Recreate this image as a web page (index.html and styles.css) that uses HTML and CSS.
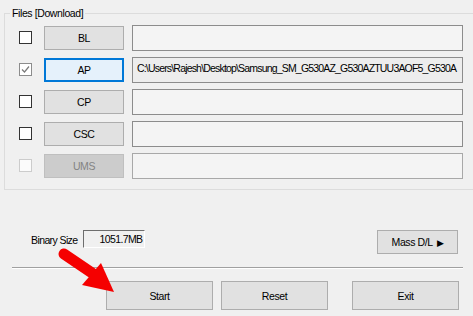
FILE: index.html
```html
<!DOCTYPE html>
<html lang="en">
<head>
    <meta charset="UTF-8">
    <title>Odin - Files</title>
    <link rel="stylesheet" href="styles.css">
</head>
<body>
    <div class="window">
        <div class="group">
            <span class="group-title">Files [Download]</span>

            <div class="file-row">
                <span class="check"></span>
                <button class="btn file-btn">BL</button>
                <div class="path"></div>
            </div>

            <div class="file-row">
                <span class="check checked">
                    <svg width="9" height="9" viewBox="0 0 9 9"><path d="M1 4.5 L3.5 7 L8 1.5" fill="none" stroke="#7a7a7a" stroke-width="1.2"/></svg>
                </span>
                <button class="btn file-btn active">AP</button>
                <div class="path">C:\Users\Rajesh\Desktop\Samsung_SM_G530AZ_G530AZTUU3AOF5_G530A</div>
            </div>

            <div class="file-row">
                <span class="check"></span>
                <button class="btn file-btn">CP</button>
                <div class="path"></div>
            </div>

            <div class="file-row">
                <span class="check"></span>
                <button class="btn file-btn">CSC</button>
                <div class="path"></div>
            </div>

            <div class="file-row">
                <span class="check disabled"></span>
                <button class="btn file-btn disabled">UMS</button>
                <div class="path"></div>
            </div>
        </div>

        <div class="info-row">
            <span class="label">Binary Size</span>
            <div class="size-box">1051.7MB</div>
            <button class="btn mass-btn">Mass D/L <span class="tri">&#9654;</span></button>
        </div>

        <div class="separator"></div>

        <div class="action-row">
            <button class="btn action start">Start</button>
            <button class="btn action reset">Reset</button>
            <button class="btn action exit">Exit</button>
        </div>

        <!-- red arrow pointing at Start -->
        <svg class="arrow" width="473" height="316" viewBox="0 0 473 316">
            <line x1="64" y1="254" x2="95" y2="275" stroke="#f50000" stroke-width="11" stroke-linecap="round"/>
            <polygon points="82,285 101,263 114,292" fill="#f50000"/>
        </svg>
    </div>
</body>
</html>
```

FILE: styles.css
```css
/* page */
body {
    margin: 0;
    background-color: #f0f0f0;
    font-family: 'Liberation Sans', Arial, sans-serif;
    font-size: 10.5px;
    letter-spacing: -0.6px;
    color: #000;
    overflow: hidden;
}

.window {
    position: relative;
    width: 473px;
    height: 316px;
    padding-top: 13px;
    box-sizing: border-box;
}

/* group box */
.group {
    position: relative;
    margin-left: 4px;
    width: 480px;
    height: 164px;
    padding-top: 11px;
    border: 1px solid #dcdcdc;
    border-right: none;
}

.group-title {
    position: absolute;
    top: -8px;
    left: 5px;
    padding: 0 2px;
    background-color: #f0f0f0;
    line-height: 14px;
    letter-spacing: -0.4px;
}

.file-row {
    display: flex;
    align-items: center;
    height: 25px;
    margin-bottom: 7px;
    padding-left: 14px;
}

/* checkboxes */
.check {
    width: 11px;
    height: 11px;
    border: 1px solid #333;
    background-color: #fff;
    display: flex;
    align-items: center;
    justify-content: center;
}

.check.checked {
    border-color: #8c8c8c;
}

.check.disabled {
    border-color: #cccccc;
    background-color: #fbfbfb;
}

/* buttons */
.btn {
    font-family: inherit;
    font-size: 10.5px;
    letter-spacing: -0.4px;
    background-color: #e1e1e1;
    border: 1px solid #adadad;
    color: #000;
    padding: 0;
}

.file-btn {
    width: 80px;
    height: 24px;
    margin-left: 12px;
}

.file-btn.active {
    border: 2px solid #0078d7;
    background-color: #e5f1fb;
}

.file-btn.disabled {
    background-color: #cccccc;
    border-color: #bfbfbf;
    color: #838383;
}

/* path textboxes */
.path {
    box-sizing: border-box;
    width: 331px;
    height: 26px;
    margin-left: 8px;
    padding: 4px 0 0 4px;
    border: 1px solid #8c8c8c;
    background-color: #f4f4f4;
    letter-spacing: -0.82px;
    white-space: nowrap;
    overflow: hidden;
}

.file-row:nth-child(3) .path {
    background-color: #ededed;
}

.file-row:last-child .path {
    border-color: #a8a8a8;
}

/* binary size + mass download */
.info-row {
    display: flex;
    align-items: flex-start;
    margin-top: 40px;
    padding-left: 31px;
}

.label {
    margin-top: 4px;
}

.size-box {
    box-sizing: border-box;
    width: 62px;
    height: 18px;
    margin-left: 5px;
    padding: 2px 1px 0 0;
    text-align: right;
    border-top: 1px solid #6d6d6d;
    border-left: 1px solid #6d6d6d;
    border-right: 1px solid #fff;
    border-bottom: 1px solid #fff;
}

.mass-btn {
    width: 81px;
    height: 24px;
    margin-left: auto;
    margin-right: 15px;
}

.tri {
    font-size: 9px;
    margin-left: 2px;
}

.separator {
    margin: 13px 10px 0 12px;
    border-top: 1px solid #a0a0a0;
    border-bottom: 1px solid #fff;
}

/* start / reset / exit */
.action-row {
    display: flex;
    margin-top: 12px;
    padding-left: 106px;
}

.action {
    width: 107px;
    height: 29px;
}

.reset {
    margin-left: 8px;
}

.exit {
    margin-left: 24px;
}

.arrow {
    position: absolute;
    top: 0;
    left: 0;
    pointer-events: none;
}
```
